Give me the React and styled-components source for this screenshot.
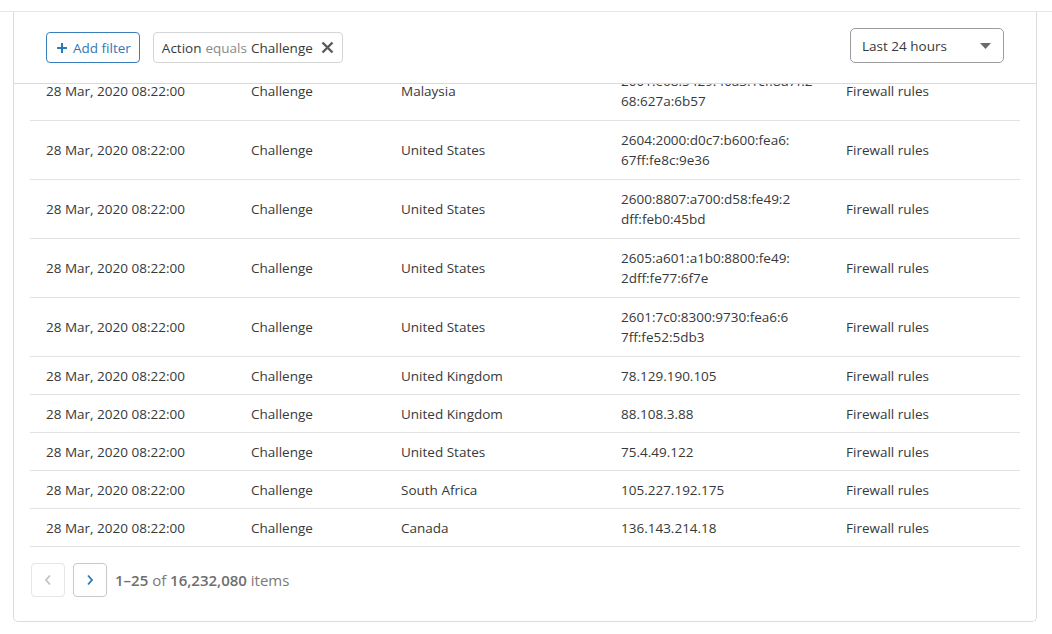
import React from "react";
import styled, { createGlobalStyle } from "styled-components";

const GlobalStyle = createGlobalStyle`
  html, body {
    margin: 0;
    padding: 0;
    background: #fff;
    font-family: "Open Sans", "Noto Sans", Arial, sans-serif;
    color: #36393a;
  }
  * { box-sizing: border-box; }
`;

const Page = styled.div`
  width: 1052px;
  height: 634px;
  overflow: hidden;
  background: #fff;
`;

const TopStrip = styled.div`
  height: 12px;
  border-bottom: 1px solid #e6e6e6;
`;

const Card = styled.div`
  margin-left: 13px;
  width: 1024px;
  border: 1px solid #dcdcdc;
  border-top: none;
  border-radius: 0 0 5px 5px;
  background: #fff;
`;

const Toolbar = styled.div`
  display: flex;
  align-items: flex-end;
  gap: 13px;
  height: 72px;
  padding: 16px 32px 20px 32px;
  border-bottom: 1px solid #dadada;
`;

const AddFilterButton = styled.button`
  display: flex;
  align-items: center;
  gap: 5px;
  height: 31px;
  padding: 0 8px 0 9px;
  background: #fff;
  border: 1px solid #3a80bd;
  border-radius: 4px;
  color: #2f78b6;
  font-family: inherit;
  font-size: 13.5px;
  cursor: pointer;
`;

const Chip = styled.div`
  display: flex;
  align-items: center;
  height: 31px;
  padding: 0 8px 0 8px;
  border: 1px solid #d4d4d4;
  border-radius: 4px;
  font-size: 13.5px;
  color: #36393a;
  white-space: nowrap;

  em {
    font-style: normal;
    color: #8a8a8a;
    margin: 0 4px;
  }
  svg {
    margin-left: 8px;
  }
`;

const Spacer = styled.div`
  flex: 1;
`;

const Select = styled.div`
  display: flex;
  align-items: center;
  justify-content: space-between;
  width: 154px;
  height: 35px;
  padding: 0 12px 0 11px;
  border: 1px solid #9c9c9c;
  border-radius: 5px;
  font-size: 13.5px;
  color: #36393a;
`;

const Viewport = styled.div`
  overflow: hidden;
  padding: 0 16px 0 16px;
`;

const Rows = styled.div`
  margin-top: -22px;
`;

const Row = styled.div`
  display: grid;
  grid-template-columns: 205px 150px 220px 225px 190px;
  align-items: center;
  min-height: 38px;
  border-bottom: 1px solid #e2e2e2;
  font-size: 13.5px;
  line-height: 20px;
`;

const Cell = styled.div`
  padding: 0 16px;
  white-space: nowrap;
  ${({ $multi }) => $multi && `padding-top: 9px; padding-bottom: 9px;`}
`;

const Line = styled.span`
  display: block;
`;

const Pager = styled.div`
  display: flex;
  align-items: center;
  gap: 8px;
  padding: 16px 17px 24px 17px;
`;

const PageButton = styled.button`
  display: flex;
  align-items: center;
  justify-content: center;
  width: 34px;
  height: 34px;
  padding: 0;
  background: #fff;
  border: 1px solid ${({ disabled }) => (disabled ? "#e6e6e6" : "#c9c9c9")};
  border-radius: 4px;
  color: ${({ disabled }) => (disabled ? "#c2c2c2" : "#2f78b6")};
`;

const PageInfo = styled.div`
  font-size: 15px;
  color: #7a7a7a;

  b {
    font-weight: 600;
    color: #6e6e6e;
  }
`;

const rows = [
  { country: "Malaysia", ip: ["2001:e68:5429:40a3:1cf:8d7f:2", "68:627a:6b57"] },
  { country: "United States", ip: ["2604:2000:d0c7:b600:fea6:", "67ff:fe8c:9e36"] },
  { country: "United States", ip: ["2600:8807:a700:d58:fe49:2", "dff:feb0:45bd"] },
  { country: "United States", ip: ["2605:a601:a1b0:8800:fe49:", "2dff:fe77:6f7e"] },
  { country: "United States", ip: ["2601:7c0:8300:9730:fea6:6", "7ff:fe52:5db3"] },
  { country: "United Kingdom", ip: ["78.129.190.105"] },
  { country: "United Kingdom", ip: ["88.108.3.88"] },
  { country: "United States", ip: ["75.4.49.122"] },
  { country: "South Africa", ip: ["105.227.192.175"] },
  { country: "Canada", ip: ["136.143.214.18"] },
];

const Plus = () => (
  <svg width="12" height="12" viewBox="0 0 12 12">
    <path d="M6 1v10M1 6h10" stroke="currentColor" strokeWidth="2" />
  </svg>
);

const Cross = () => (
  <svg width="13" height="13" viewBox="0 0 13 13">
    <path d="M1.5 1.5l10 10M11.5 1.5l-10 10" stroke="#5a5a5a" strokeWidth="2.4" />
  </svg>
);

const Caret = () => (
  <svg width="11" height="6" viewBox="0 0 11 6">
    <path d="M0 0h11L5.5 6z" fill="#6b6b6b" />
  </svg>
);

const Chevron = ({ left }) => (
  <svg width="8" height="12" viewBox="0 0 8 12">
    <path
      d={left ? "M6 1.5L2 6l4 4.5" : "M2 1.5L6 6l-4 4.5"}
      stroke="currentColor"
      strokeWidth="1.8"
      fill="none"
    />
  </svg>
);

export default function App() {
  return (
    <Page>
      <GlobalStyle />
      <TopStrip />
      <Card>
        <Toolbar>
          <AddFilterButton>
            <Plus />
            Add filter
          </AddFilterButton>
          <Chip>
            Action<em>equals</em>Challenge
            <Cross />
          </Chip>
          <Spacer />
          <Select>
            Last 24 hours
            <Caret />
          </Select>
        </Toolbar>
        <Viewport>
          <Rows>
            {rows.map((r, i) => (
              <Row key={i}>
                <Cell>28 Mar, 2020 08:22:00</Cell>
                <Cell>Challenge</Cell>
                <Cell>{r.country}</Cell>
                <Cell $multi={r.ip.length > 1}>
                  {r.ip.map((l) => (
                    <Line key={l}>{l}</Line>
                  ))}
                </Cell>
                <Cell>Firewall rules</Cell>
              </Row>
            ))}
          </Rows>
        </Viewport>
        <Pager>
          <PageButton disabled>
            <Chevron left />
          </PageButton>
          <PageButton>
            <Chevron />
          </PageButton>
          <PageInfo>
            <b>1–25</b> of <b>16,232,080</b> items
          </PageInfo>
        </Pager>
      </Card>
    </Page>
  );
}
